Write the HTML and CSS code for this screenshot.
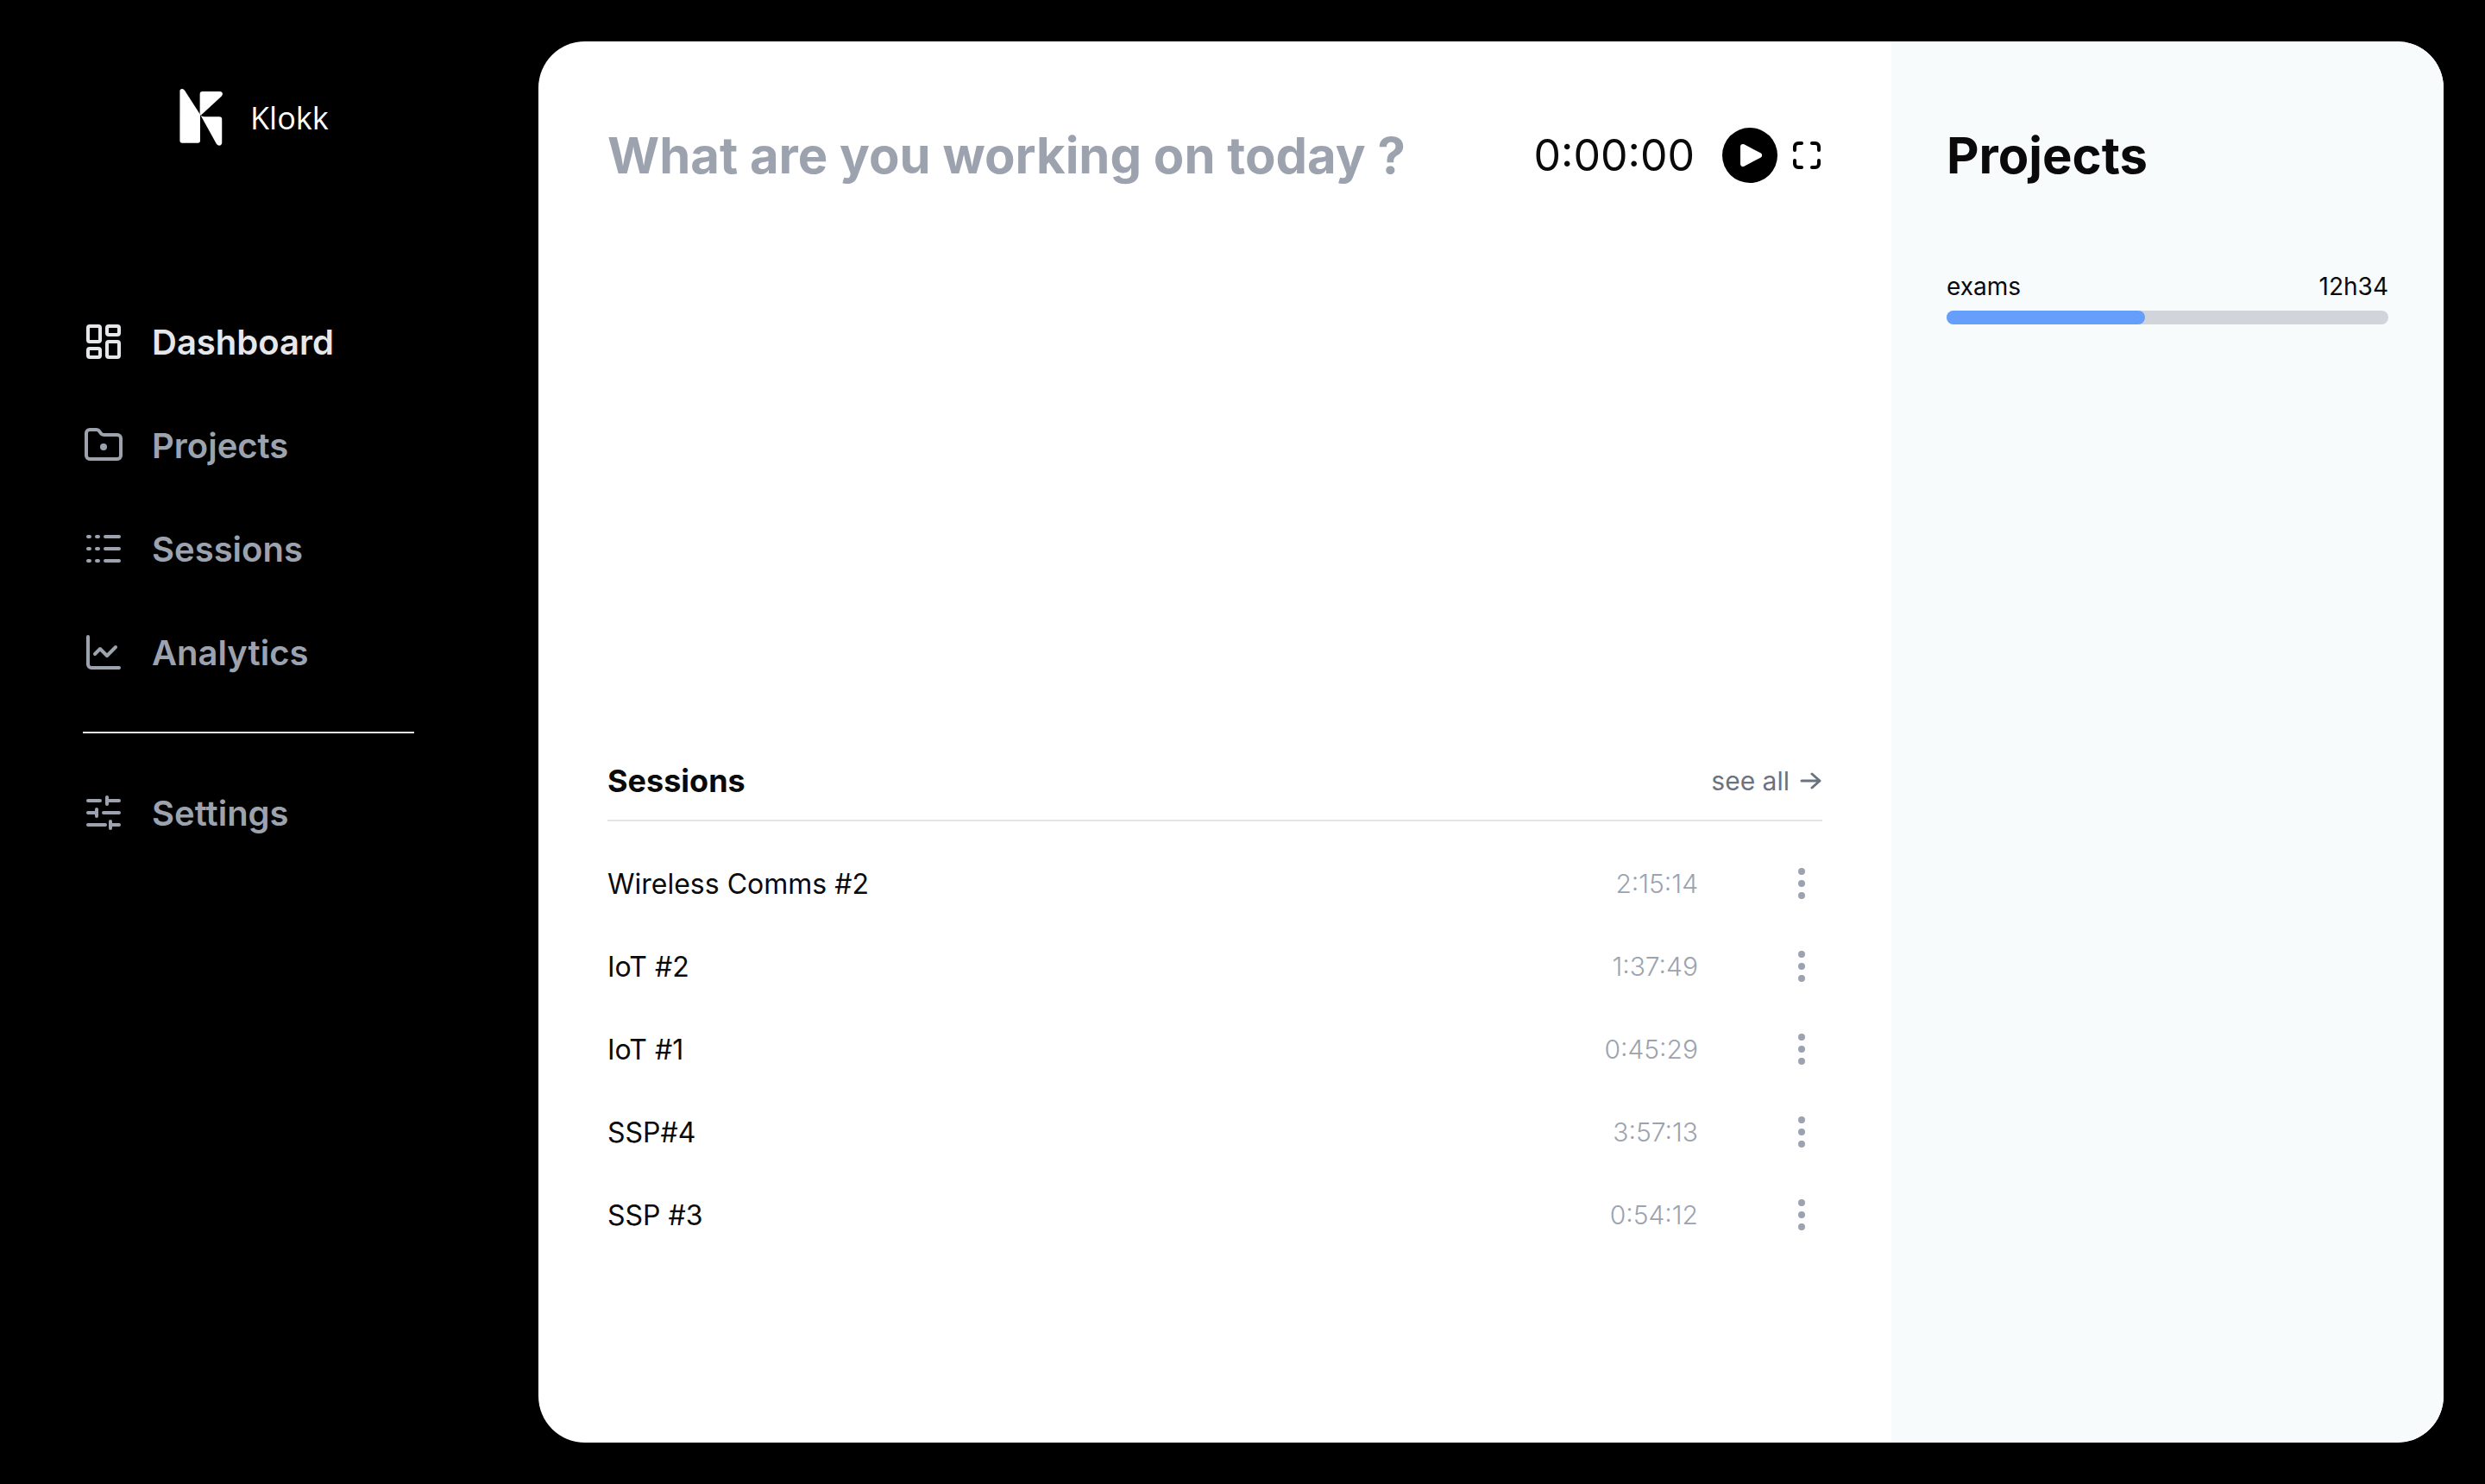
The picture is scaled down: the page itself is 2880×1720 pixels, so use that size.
FILE: index.html
```
<!DOCTYPE html>
<html lang="en">
  <head>
    <meta charset="utf-8">
    <meta name="viewport" content="width=device-width, initial-scale=1.0">
    <title>Klokk</title>

    <link rel="stylesheet" href="styles.css">
  </head>

  <body>

    <!-- Sidebar -->
    <aside class="sidebar">
      <a class="brand" href="#">
        <svg class="brand-logo" viewBox="0 0 148 196" fill="currentColor" aria-hidden="true">
          <path d="M9 0Q14 0 18 6L71 88V178Q71 186 63 186H9Q1 186 1 178V8Q1 0 9 0Z"/>
          <path d="M70 18Q70 9 79 9H138Q148 9 148 18Q148 22 144 26L73 91L70 86Z"/>
          <path d="M72 90Q76 96 85 96H137Q146 96 146 104V186Q144 195 136 195Q130 194 127 189Z"/>
        </svg>
        <span class="brand-name">Klokk</span>
      </a>

      <nav class="menu">
        <a class="menu-item active" href="#">
          <svg class="icon" viewBox="0 0 24 24" aria-hidden="true">
            <rect x="3" y="3" width="7" height="9" rx="1"/>
            <rect x="14" y="3" width="7" height="5" rx="1"/>
            <rect x="14" y="12" width="7" height="9" rx="1"/>
            <rect x="3" y="16" width="7" height="5" rx="1"/>
          </svg>
          Dashboard
        </a>
        <a class="menu-item" href="#">
          <svg class="icon" viewBox="0 0 24 24" aria-hidden="true">
            <path d="M4 20h16a2 2 0 0 0 2-2V8a2 2 0 0 0-2-2h-7.93a2 2 0 0 1-1.66-.9l-.82-1.2A2 2 0 0 0 7.93 3H4a2 2 0 0 0-2 2v13c0 1.1.9 2 2 2Z"/>
            <circle cx="12" cy="13" r="1"/>
          </svg>
          Projects
        </a>
        <a class="menu-item" href="#">
          <svg class="icon" viewBox="0 0 24 24" aria-hidden="true">
            <path d="M3 5h1M3 12h1M3 19h1M8 5h1M8 12h1M8 19h1M13 5h8M13 12h8M13 19h8"/>
          </svg>
          Sessions
        </a>
        <a class="menu-item" href="#">
          <svg class="icon" viewBox="0 0 24 24" aria-hidden="true">
            <path d="M3 3v16a2 2 0 0 0 2 2h16"/>
            <path d="m19 9-5 5-4-4-3 3"/>
          </svg>
          Analytics
        </a>
        <hr class="menu-line">
        <a class="menu-item" href="#">
          <svg class="icon" viewBox="0 0 24 24" aria-hidden="true">
            <path d="M3 5h7M14 5h7M14 3v4M3 12h5M12 12h9M8 10v4M3 19h10M16 19h5M16 17v4"/>
          </svg>
          Settings
        </a>
      </nav>
    </aside>

    <div class="panel">

      <main class="main">
        <!-- Timer -->
        <form class="tracker">
          <input class="tracker-input" type="text" aria-label="Task" placeholder="What are you working on today ?">
          <div class="tracker-time">0:00:00</div>
          <button class="play" type="button" aria-label="Start">
            <svg width="64" height="64" viewBox="0 0 64 64" aria-hidden="true">
              <path d="M24 22L43 32L24 42Z"/>
            </svg>
          </button>
          <button class="expand" type="button" aria-label="Fullscreen">
            <svg width="36" height="36" viewBox="0 0 36 36" aria-hidden="true">
              <path d="M4 12V8a4 4 0 0 1 4-4h4M24 4h4a4 4 0 0 1 4 4v4M32 24v4a4 4 0 0 1-4 4h-4M12 32H8a4 4 0 0 1-4-4v-4"/>
            </svg>
          </button>
        </form>

        <!-- Last sessions -->
        <section class="sessions">
          <header class="sessions-header">
            <h2>Sessions</h2>
            <a class="see-all" href="#">see all
              <svg width="26" height="20" viewBox="0 0 26 20" aria-hidden="true">
                <path d="M2 10h21M14 2l9 8-9 8"/>
              </svg>
            </a>
          </header>
          <ul class="session-list">
            <li class="session">
              <span class="session-name">Wireless Comms #2</span>
              <span class="session-time">2:15:14</span>
              <button class="more" type="button" aria-label="More">
                <svg class="icon" viewBox="0 0 24 24"><circle cx="12" cy="5" r="1"/><circle cx="12" cy="12" r="1"/><circle cx="12" cy="19" r="1"/></svg>
              </button>
            </li>
            <li class="session">
              <span class="session-name">IoT #2</span>
              <span class="session-time">1:37:49</span>
              <button class="more" type="button" aria-label="More">
                <svg class="icon" viewBox="0 0 24 24"><circle cx="12" cy="5" r="1"/><circle cx="12" cy="12" r="1"/><circle cx="12" cy="19" r="1"/></svg>
              </button>
            </li>
            <li class="session">
              <span class="session-name">IoT #1</span>
              <span class="session-time">0:45:29</span>
              <button class="more" type="button" aria-label="More">
                <svg class="icon" viewBox="0 0 24 24"><circle cx="12" cy="5" r="1"/><circle cx="12" cy="12" r="1"/><circle cx="12" cy="19" r="1"/></svg>
              </button>
            </li>
            <li class="session">
              <span class="session-name">SSP#4</span>
              <span class="session-time">3:57:13</span>
              <button class="more" type="button" aria-label="More">
                <svg class="icon" viewBox="0 0 24 24"><circle cx="12" cy="5" r="1"/><circle cx="12" cy="12" r="1"/><circle cx="12" cy="19" r="1"/></svg>
              </button>
            </li>
            <li class="session">
              <span class="session-name">SSP #3</span>
              <span class="session-time">0:54:12</span>
              <button class="more" type="button" aria-label="More">
                <svg class="icon" viewBox="0 0 24 24"><circle cx="12" cy="5" r="1"/><circle cx="12" cy="12" r="1"/><circle cx="12" cy="19" r="1"/></svg>
              </button>
            </li>
          </ul>
        </section>
      </main>

      <!-- Projects -->
      <aside class="projects">
        <h1>Projects</h1>
        <div class="project">
          <div class="project-label">
            <span>exams</span>
            <span>12h34</span>
          </div>
          <div class="bar"><div class="bar-fill" style="width: 45%"></div></div>
        </div>
      </aside>

    </div>

  </body>
</html>
```
FILE: styles.css
```
* {
  box-sizing: border-box;
}

body {
  margin: 0;
  min-height: 100vh;
  display: flex;
  background-color: #000;
  color: #0a0a0a;
  font-family: Inter, "Liberation Sans", sans-serif;
  font-size: 32px;
}

a {
  color: inherit;
  text-decoration: none;
}

button {
  padding: 0;
  border: none;
  background: none;
  cursor: pointer;
}

svg {
  display: block;
  flex: none;
}

.icon {
  width: 48px;
  height: 48px;
  fill: none;
  stroke: currentColor;
  stroke-width: 2;
  stroke-linecap: round;
  stroke-linejoin: round;
}

/* sidebar */
.sidebar {
  flex: none;
  width: 624px;
  padding: 104px 144px 48px 96px;
}

.brand {
  display: flex;
  align-items: center;
  gap: 32px;
  height: 64px;
  margin-left: 112px;
  color: #fff;
}

.brand-logo {
  width: 50px;
  height: 66px;
}

.brand-name {
  font-family: "Open Sans", sans-serif;
  font-size: 36px;
  font-weight: 500;
}

.menu {
  margin-top: 168px;
}

.menu-item {
  display: flex;
  align-items: center;
  gap: 32px;
  height: 120px;
  color: #9ca3af;
  font-size: 40px;
  font-weight: 600;
}

.menu-item.active {
  color: #e5e7eb;
}

.menu-line {
  height: 2px;
  margin: 32px 0;
  border: none;
  background-color: #e5e7eb;
}

/* white panel */
.panel {
  flex: 1;
  display: flex;
  margin: 48px 48px 48px 0;
  border-radius: 54px;
  background-color: #fff;
  overflow: hidden;
}

.main {
  flex: 1;
  min-width: 0;
  display: grid;
  grid-template-rows: 1fr 1fr;
  padding: 0 80px;
}

.tracker {
  display: flex;
  align-items: center;
  align-self: start;
  height: 96px;
  margin-top: 84px;
}

.tracker-input {
  flex: 1;
  min-width: 0;
  padding: 0;
  border: none;
  outline: none;
  background: none;
  color: inherit;
  font: inherit;
  font-size: 58px;
  font-weight: 700;
}

.tracker-input::placeholder {
  color: #9ca3af;
  opacity: 1;
}

.tracker-time {
  font-size: 50px;
}

.play {
  width: 64px;
  height: 64px;
  margin: 0 16px 0 32px;
  border-radius: 50%;
  background-color: #000;
}

.play svg {
  fill: #fff;
  stroke: #fff;
  stroke-width: 6;
  stroke-linejoin: round;
}

.expand svg {
  fill: none;
  stroke: #000;
  stroke-width: 4;
  stroke-linecap: round;
  stroke-linejoin: round;
}

/* sessions */
.sessions-header {
  display: flex;
  align-items: center;
  justify-content: space-between;
  height: 92px;
  border-bottom: 2px solid #e5e5e5;
}

.sessions-header h2 {
  margin: 0;
  font-size: 36px;
  font-weight: 700;
}

.see-all {
  display: flex;
  align-items: center;
  gap: 12px;
  color: #6b7280;
  font-size: 30px;
}

.see-all svg {
  fill: none;
  stroke: currentColor;
  stroke-width: 3;
  stroke-linecap: round;
  stroke-linejoin: round;
}

.session-list {
  margin: 24px 0 0;
  padding: 0;
  list-style: none;
}

.session {
  display: flex;
  align-items: center;
  height: 96px;
}

.session-name {
  flex: 1;
}

.session-time {
  margin-right: 96px;
  color: #9ca3af;
  font-size: 30px;
  font-weight: 300;
}

.more {
  color: #9ca3af;
}

/* projects */
.projects {
  flex: none;
  width: 640px;
  padding: 84px 64px;
  background-color: #f8fbfc;
}

.projects h1 {
  margin: 0;
  font-size: 58px;
  font-weight: 700;
  line-height: 96px;
}

.project {
  margin-top: 84px;
}

.project-label {
  display: flex;
  justify-content: space-between;
  font-size: 28px;
  line-height: 40px;
}

.bar {
  height: 16px;
  margin-top: 8px;
  border-radius: 8px;
  background-color: #d1d5db;
}

.bar-fill {
  height: 100%;
  border-radius: 8px;
  background-color: #669ffb;
}
```
